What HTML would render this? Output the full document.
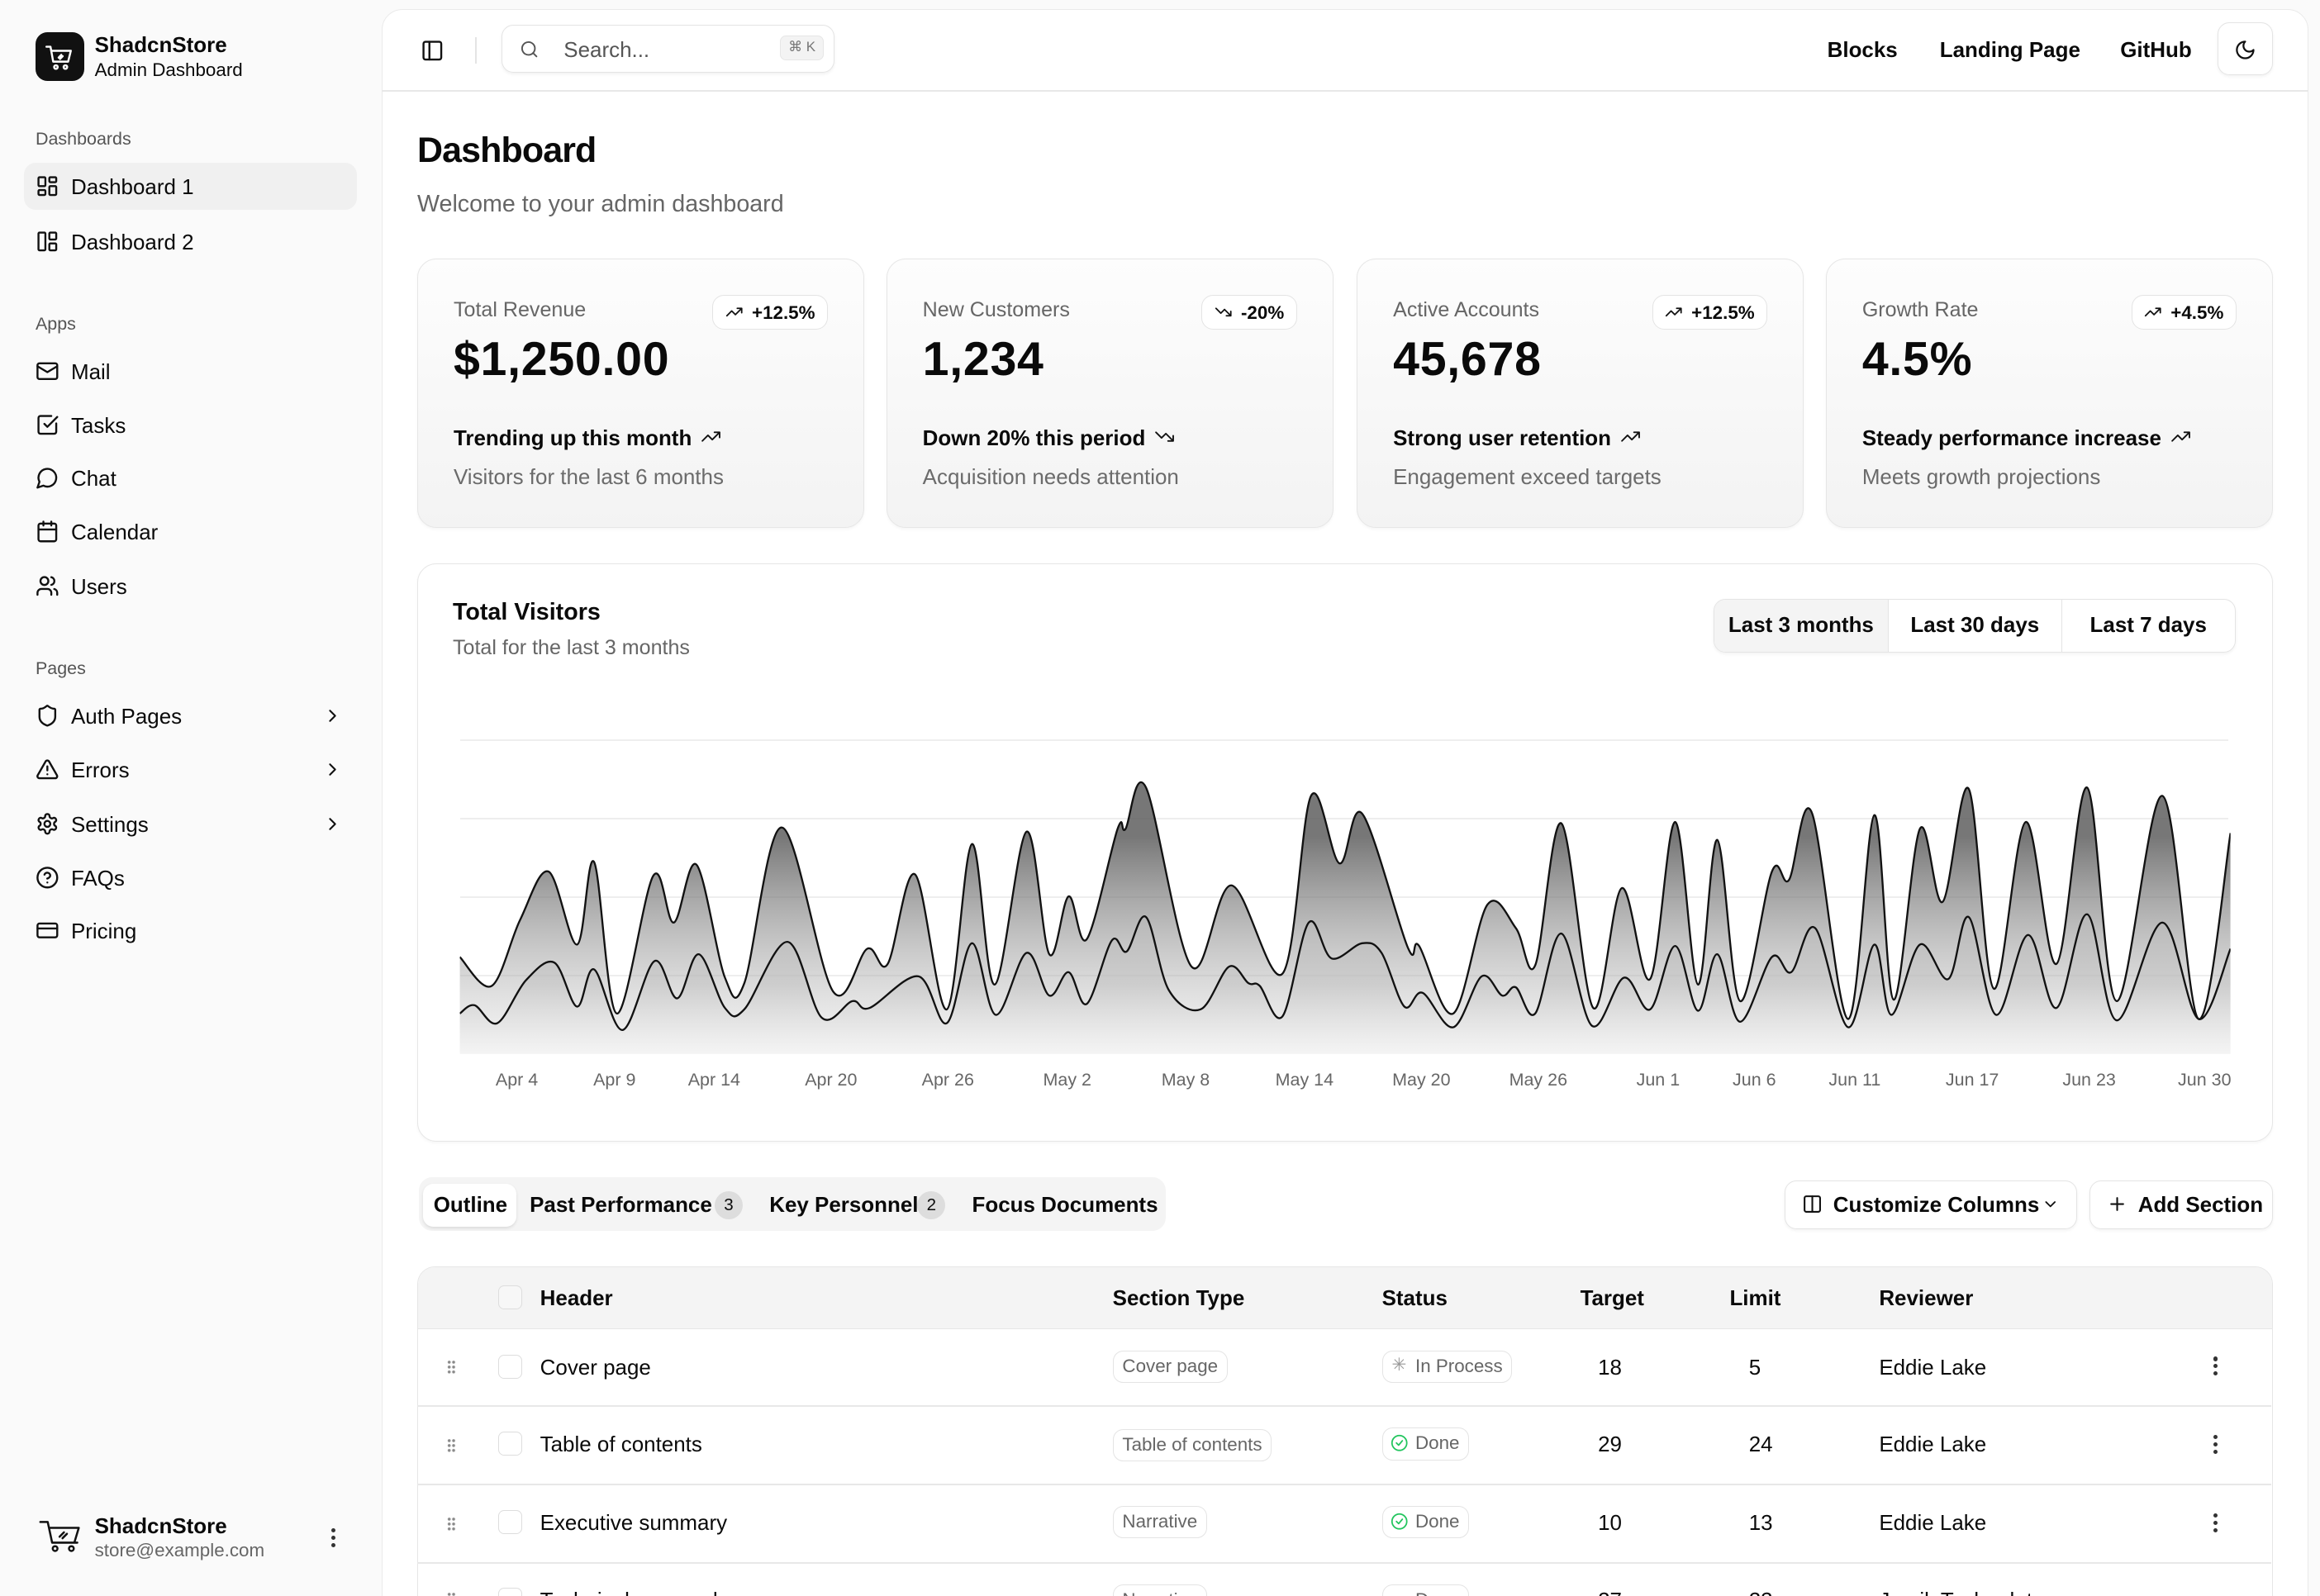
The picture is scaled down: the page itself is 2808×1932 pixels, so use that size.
<!DOCTYPE html>
<html><head><meta charset="utf-8">
<style>
*{box-sizing:border-box;margin:0;padding:0}
html,body{width:2808px;height:1932px;overflow:hidden;background:#fafafa}
#w{position:relative;width:1568px;height:1079px;zoom:1.7908;font-family:"Liberation Sans",Arial,sans-serif;color:#0a0a0a;background:#fafafa;overflow:hidden}
.a{position:absolute}
svg.i{position:absolute;width:16px;height:16px;fill:none;stroke:#111;stroke-width:2;stroke-linecap:round;stroke-linejoin:round}
.nav{position:absolute;left:48px;font-size:14.5px}
.grp{position:absolute;left:24px;font-size:12px;color:#555}
.card{position:absolute;top:175px;width:302px;height:182px;border:1px solid #e6e6e6;border-radius:13px;background:linear-gradient(#fdfdfd,#f3f3f3);box-shadow:0 1px 2px rgba(0,0,0,.04)}
.card .l{position:absolute;left:24px;top:26px;font-size:14px;color:#666}
.card .v{position:absolute;left:24px;top:49px;font-size:32px;font-weight:bold;letter-spacing:.4px}
.card .t{position:absolute;left:24px;top:112px;font-size:14.5px;font-weight:bold}
.card .t svg{position:relative;display:inline-block;vertical-align:-1px;margin-left:6px;width:14px;height:14px;stroke-width:1.8}
.card .s{position:absolute;left:24px;top:138px;font-size:14.5px;color:#6b6b6b}
.badge{position:absolute;right:24px;top:24px;height:23px;border:1px solid #e4e4e4;border-radius:8px;background:#fff;font-size:12.5px;font-weight:bold;padding:4px 8px 0 26px}
.badge svg{left:8px;top:5px;width:12px;height:12px;stroke-width:2}
.th{position:absolute;top:869px;font-size:14.5px;font-weight:bold}
.td{position:absolute;font-size:14.5px}
.pill{position:absolute;height:22px;border:1px solid #e4e4e4;border-radius:7px;font-size:12.5px;color:#666;padding:3px 6px 0;background:#fff}
.cb{position:absolute;left:337px;width:16px;height:16px;border:1px solid #ddd;border-radius:4px;background:#fff}
.rowline{position:absolute;left:282px;width:1253px;height:1px;background:#e8e8e8}
.dots{position:absolute;left:1496px;width:4px}
.dots i{display:block;width:3px;height:3px;border-radius:50%;background:#333;margin-bottom:2px}
.grip{position:absolute;left:302px;width:6px;height:10px;background:radial-gradient(circle,#888 0.8px,transparent 1.2px) 0 0/3px 3.3px}
</style></head><body><div id="w">

<div class="a" style="left:24px;top:22px;width:33px;height:33px;border-radius:8px;background:#111"></div>
<svg class="i" style="left:29px;top:28px;width:23px;height:22px;stroke:#fff;stroke-width:1.5" viewBox="0 0 24 24"><path d="M2 4h3l2 11h11l2-8H6"/><circle cx="9" cy="19" r="1.3"/><circle cx="16" cy="19" r="1.3"/><path d="M11 12l2-2M12 13l2-2"/></svg>
<div class="a" style="left:64px;top:22px;font-size:14.5px;font-weight:bold">ShadcnStore</div>
<div class="a" style="left:64px;top:40px;font-size:12.5px">Admin Dashboard</div>

<div class="grp" style="top:87px">Dashboards</div>
<div class="a" style="left:16px;top:110px;width:225px;height:32px;border-radius:8px;background:#f0f0f0"></div>
<svg class="i" style="left:24px;top:118px" viewBox="0 0 24 24"><rect x="3" y="3" width="7" height="9" rx="1"/><rect x="14" y="3" width="7" height="5" rx="1"/><rect x="14" y="12" width="7" height="9" rx="1"/><rect x="3" y="16" width="7" height="5" rx="1"/></svg>
<div class="nav" style="top:118px">Dashboard 1</div>
<svg class="i" style="left:24px;top:155px" viewBox="0 0 24 24"><rect x="3" y="3" width="7" height="18" rx="1"/><rect x="14" y="3" width="7" height="7" rx="1"/><rect x="14" y="14" width="7" height="7" rx="1"/></svg>
<div class="nav" style="top:155px">Dashboard 2</div>

<div class="grp" style="top:212px">Apps</div>
<svg class="i" style="left:24px;top:243px" viewBox="0 0 24 24"><rect x="2" y="4" width="20" height="16" rx="2"/><path d="M22 7l-10 6L2 7"/></svg>
<div class="nav" style="top:243px">Mail</div>
<svg class="i" style="left:24px;top:279px" viewBox="0 0 24 24"><path d="M21 10.5V19a2 2 0 0 1-2 2H5a2 2 0 0 1-2-2V5a2 2 0 0 1 2-2h11"/><path d="M9 11l3 3L22 4"/></svg>
<div class="nav" style="top:279px">Tasks</div>
<svg class="i" style="left:24px;top:315px" viewBox="0 0 24 24"><path d="M7.9 20A9 9 0 1 0 4 16.1L2 22z"/></svg>
<div class="nav" style="top:315px">Chat</div>
<svg class="i" style="left:24px;top:351px" viewBox="0 0 24 24"><rect x="3" y="4" width="18" height="18" rx="2"/><path d="M16 2v4M8 2v4M3 10h18"/></svg>
<div class="nav" style="top:351px">Calendar</div>
<svg class="i" style="left:24px;top:388px" viewBox="0 0 24 24"><path d="M16 21v-2a4 4 0 0 0-4-4H6a4 4 0 0 0-4 4v2"/><circle cx="9" cy="7" r="4"/><path d="M22 21v-2a4 4 0 0 0-3-3.9M16 3.1a4 4 0 0 1 0 7.8"/></svg>
<div class="nav" style="top:388px">Users</div>

<div class="grp" style="top:445px">Pages</div>
<svg class="i" style="left:24px;top:476px" viewBox="0 0 24 24"><path d="M20 13c0 5-3.5 7.5-7.7 9a1 1 0 0 1-.7 0C7.5 20.5 4 18 4 13V6a1 1 0 0 1 1-1c2 0 4.5-1.2 6.2-2.7a1.2 1.2 0 0 1 1.5 0C14.5 3.8 17 5 19 5a1 1 0 0 1 1 1z"/></svg>
<div class="nav" style="top:476px">Auth Pages</div>
<svg class="i" style="left:24px;top:512px" viewBox="0 0 24 24"><path d="M21.7 18l-8-14a2 2 0 0 0-3.5 0l-8 14A2 2 0 0 0 4 21h16a2 2 0 0 0 1.7-3zM12 9v4M12 17h.01"/></svg>
<div class="nav" style="top:512px">Errors</div>
<svg class="i" style="left:24px;top:549px" viewBox="0 0 24 24"><circle cx="12" cy="12" r="3"/><path d="M12.2 2h-.4a2 2 0 0 0-2 2v.2a2 2 0 0 1-1 1.7l-.4.3a2 2 0 0 1-2 0l-.2-.1a2 2 0 0 0-2.7.7l-.2.4a2 2 0 0 0 .7 2.7l.2.1a2 2 0 0 1 1 1.7v.5a2 2 0 0 1-1 1.7l-.2.1a2 2 0 0 0-.7 2.7l.2.4a2 2 0 0 0 2.7.7l.2-.1a2 2 0 0 1 2 0l.4.3a2 2 0 0 1 1 1.7v.2a2 2 0 0 0 2 2h.4a2 2 0 0 0 2-2v-.2a2 2 0 0 1 1-1.7l.4-.3a2 2 0 0 1 2 0l.2.1a2 2 0 0 0 2.7-.7l.2-.4a2 2 0 0 0-.7-2.7l-.2-.1a2 2 0 0 1-1-1.7v-.5a2 2 0 0 1 1-1.700l.2-.1a2 2 0 0 0 .7-2.7l-.2-.4a2 2 0 0 0-2.7-.7l-.2.1a2 2 0 0 1-2 0l-.4-.3a2 2 0 0 1-1-1.7V4a2 2 0 0 0-2-2z"/></svg>
<div class="nav" style="top:549px">Settings</div>
<svg class="i" style="left:24px;top:585px" viewBox="0 0 24 24"><circle cx="12" cy="12" r="10"/><path d="M9.1 9a3 3 0 0 1 5.8 1c0 2-3 3-3 3M12 17h.01"/></svg>
<div class="nav" style="top:585px">FAQs</div>
<svg class="i" style="left:24px;top:621px" viewBox="0 0 24 24"><rect x="2" y="5" width="20" height="14" rx="2"/><path d="M2 10h20"/></svg>
<div class="nav" style="top:621px">Pricing</div>
<svg class="i" style="left:218px;top:477px;width:14px;height:14px" viewBox="0 0 24 24"><path d="M9 18l6-6-6-6"/></svg>
<svg class="i" style="left:218px;top:513px;width:14px;height:14px" viewBox="0 0 24 24"><path d="M9 18l6-6-6-6"/></svg>
<svg class="i" style="left:218px;top:550px;width:14px;height:14px" viewBox="0 0 24 24"><path d="M9 18l6-6-6-6"/></svg>

<svg class="i" style="left:26px;top:1026px;width:30px;height:26px;stroke-width:1.4" viewBox="0 0 30 26"><path d="M1 3h5l3 14h17M7 7h20l-3 10"/><circle cx="11" cy="21" r="1.6"/><circle cx="22" cy="21" r="1.6"/><path d="M14 13l3-3M16 14l3-3"/></svg>
<div class="a" style="left:64px;top:1023px;font-size:14.5px;font-weight:bold">ShadcnStore</div>
<div class="a" style="left:64px;top:1041px;font-size:12.5px;color:#666">store@example.com</div>
<div class="dots" style="left:224px;top:1033px"><i></i><i></i><i></i></div>

<div class="a" style="left:258px;top:6px;width:1302px;height:1100px;background:#fff;border:1px solid #eaeaea;border-radius:14px"></div>
<div class="a" style="left:258px;top:61px;width:1302px;height:1px;background:#e8e8e8"></div>
<svg class="i" style="left:284px;top:26px" viewBox="0 0 24 24"><rect x="3" y="3" width="18" height="18" rx="2"/><path d="M9 3v18"/></svg>
<div class="a" style="left:321px;top:25px;width:1px;height:18px;background:#e4e4e4"></div>
<div class="a" style="left:339px;top:17px;width:225px;height:32px;border:1px solid #e4e4e4;border-radius:8px;box-shadow:0 1px 2px rgba(0,0,0,.06)"></div>
<svg class="i" style="left:351px;top:27px;width:13px;height:13px;stroke:#555" viewBox="0 0 24 24"><circle cx="11" cy="11" r="8"/><path d="M21 21l-4.3-4.3"/></svg>
<div class="a" style="left:381px;top:25px;font-size:14.5px;color:#555">Search...</div>
<div class="a" style="left:527px;top:24px;width:30px;height:17px;border-radius:4px;background:#f3f3f3;border:1px solid #e6e6e6;font-size:9.5px;color:#777;text-align:center;line-height:15px">⌘ K</div>
<div class="a" style="left:1235px;top:25px;font-size:14.5px;font-weight:600">Blocks</div>
<div class="a" style="left:1311px;top:25px;font-size:14.5px;font-weight:600">Landing Page</div>
<div class="a" style="left:1433px;top:25px;font-size:14.5px;font-weight:600">GitHub</div>
<div class="a" style="left:1499px;top:15px;width:37px;height:36px;border:1px solid #e4e4e4;border-radius:8px;box-shadow:0 1px 2px rgba(0,0,0,.05)"></div>
<svg class="i" style="left:1510px;top:26px;width:15px;height:15px" viewBox="0 0 24 24"><path d="M12 3a6 6 0 0 0 9 9 9 9 0 1 1-9-9z"/></svg>

<div class="a" style="left:282px;top:88px;font-size:24px;font-weight:bold;letter-spacing:-.5px">Dashboard</div>
<div class="a" style="left:282px;top:129px;font-size:16px;color:#666">Welcome to your admin dashboard</div>

<div class="card" style="left:282px"><div class="l">Total Revenue</div><div class="badge"><svg class="i" viewBox="0 0 24 24"><path d="M22 7l-8.5 8.5-5-5L2 17M16 7h6v6"/></svg>+12.5%</div><div class="v">$1,250.00</div><div class="t">Trending up this month<svg class="i" viewBox="0 0 24 24"><path d="M22 7l-8.5 8.5-5-5L2 17M16 7h6v6"/></svg></div><div class="s">Visitors for the last 6 months</div></div>
<div class="card" style="left:599px"><div class="l">New Customers</div><div class="badge"><svg class="i" viewBox="0 0 24 24"><path d="M22 17l-8.5-8.5-5 5L2 7M16 17h6v-6"/></svg>-20%</div><div class="v">1,234</div><div class="t">Down 20% this period<svg class="i" viewBox="0 0 24 24"><path d="M22 17l-8.5-8.5-5 5L2 7M16 17h6v-6"/></svg></div><div class="s">Acquisition needs attention</div></div>
<div class="card" style="left:917px"><div class="l">Active Accounts</div><div class="badge"><svg class="i" viewBox="0 0 24 24"><path d="M22 7l-8.5 8.5-5-5L2 17M16 7h6v6"/></svg>+12.5%</div><div class="v">45,678</div><div class="t">Strong user retention<svg class="i" viewBox="0 0 24 24"><path d="M22 7l-8.5 8.5-5-5L2 17M16 7h6v6"/></svg></div><div class="s">Engagement exceed targets</div></div>
<div class="card" style="left:1234px"><div class="l">Growth Rate</div><div class="badge"><svg class="i" viewBox="0 0 24 24"><path d="M22 7l-8.5 8.5-5-5L2 17M16 7h6v6"/></svg>+4.5%</div><div class="v">4.5%</div><div class="t">Steady performance increase<svg class="i" viewBox="0 0 24 24"><path d="M22 7l-8.5 8.5-5-5L2 17M16 7h6v6"/></svg></div><div class="s">Meets growth projections</div></div>

<div class="a" style="left:282px;top:381px;width:1254px;height:391px;border:1px solid #e6e6e6;border-radius:13px;background:#fff;box-shadow:0 1px 2px rgba(0,0,0,.04)"></div>
<div class="a" style="left:306px;top:405px;font-size:16px;font-weight:bold">Total Visitors</div>
<div class="a" style="left:306px;top:430px;font-size:14px;color:#666">Total for the last 3 months</div>
<div class="a" style="left:1158px;top:405px;width:353px;height:36px;border:1px solid #e4e4e4;border-radius:8px;overflow:hidden;display:flex;font-size:14.5px;font-weight:600;box-shadow:0 1px 2px rgba(0,0,0,.05)">
<div style="width:118px;background:#f4f4f4;text-align:center;line-height:34px;border-right:1px solid #e4e4e4">Last 3 months</div>
<div style="width:117px;text-align:center;line-height:34px;border-right:1px solid #e4e4e4">Last 30 days</div>
<div style="flex:1;text-align:center;line-height:34px">Last 7 days</div></div>
<div class="a" style="left:311px;top:500px;width:1195px;height:1px;background:#eee"></div>
<div class="a" style="left:311px;top:553px;width:1195px;height:1px;background:#eee"></div>
<div class="a" style="left:311px;top:606px;width:1195px;height:1px;background:#eee"></div>
<div class="a" style="left:311px;top:659px;width:1195px;height:1px;background:#eee"></div>
<svg id="ch" class="a" style="left:301.5px;top:480.2px;width:1206px;height:257px;overflow:hidden" viewBox="0 0 1568 1380" preserveAspectRatio="none">
<defs>
<linearGradient id="g1" x1="0" y1="0" x2="0" y2="1"><stop offset="0.2" stop-color="#555" stop-opacity=".8"/><stop offset="1" stop-color="#ddd" stop-opacity=".3"/></linearGradient>
<linearGradient id="g2" x1="0" y1="0" x2="0" y2="1"><stop offset="0.5" stop-color="#bbb" stop-opacity=".45"/><stop offset="1" stop-color="#f2f2f2" stop-opacity=".3"/></linearGradient>
<clipPath id="cp"><rect x="12" y="0" width="1556" height="1247"/></clipPath>
</defs>
<g clip-path="url(#cp)"><path id="f1" fill="url(#g1)"/><path id="f2" fill="url(#g2)"/><path id="s1" fill="none" stroke="#111" stroke-width="1.3" vector-effect="non-scaling-stroke"/><path id="s2" fill="none" stroke="#111" stroke-width="1.3" vector-effect="non-scaling-stroke"/></g>
</svg>
<div class="a" style="top:723px;left:0;width:1568px;font-size:12px;color:#666">
<span class="a" style="left:335px">Apr 4</span><span class="a" style="left:401px">Apr 9</span><span class="a" style="left:465px">Apr 14</span><span class="a" style="left:544px">Apr 20</span><span class="a" style="left:623px">Apr 26</span><span class="a" style="left:705px">May 2</span><span class="a" style="left:785px">May 8</span><span class="a" style="left:862px">May 14</span><span class="a" style="left:941px">May 20</span><span class="a" style="left:1020px">May 26</span><span class="a" style="left:1106px">Jun 1</span><span class="a" style="left:1171px">Jun 6</span><span class="a" style="left:1236px">Jun 11</span><span class="a" style="left:1315px">Jun 17</span><span class="a" style="left:1394px">Jun 23</span><span class="a" style="left:1472px">Jun 30</span></div>

<div class="a" style="left:283px;top:796px;width:505px;height:36px;background:#f4f4f4;border-radius:9px"></div>
<div class="a" style="left:286px;top:800px;width:63px;height:29px;background:#fff;border-radius:7px;box-shadow:0 1px 2px rgba(0,0,0,.1)"></div>
<div class="a" style="left:293px;top:806px;font-size:14.5px;font-weight:600">Outline</div>
<div class="a" style="left:358px;top:806px;font-size:14.5px;font-weight:600">Past Performance</div>
<div class="a" style="left:483px;top:805px;width:19px;height:19px;border-radius:50%;background:#ddd;font-size:11.5px;text-align:center;line-height:19px">3</div>
<div class="a" style="left:520px;top:806px;font-size:14.5px;font-weight:600">Key Personnel</div>
<div class="a" style="left:620px;top:805px;width:19px;height:19px;border-radius:50%;background:#ddd;font-size:11.5px;text-align:center;line-height:19px">2</div>
<div class="a" style="left:657px;top:806px;font-size:14.5px;font-weight:600">Focus Documents</div>
<div class="a" style="left:1206px;top:798px;width:198px;height:33px;border:1px solid #e4e4e4;border-radius:8px;box-shadow:0 1px 2px rgba(0,0,0,.05)"></div>
<svg class="i" style="left:1218px;top:807px;width:14px;height:14px" viewBox="0 0 24 24"><rect x="3" y="3" width="18" height="18" rx="2"/><path d="M12 3v18"/></svg>
<div class="a" style="left:1239px;top:806px;font-size:14.5px;font-weight:600">Customize Columns</div>
<svg class="i" style="left:1380px;top:808px;width:12px;height:12px" viewBox="0 0 24 24"><path d="M6 9l6 6 6-6"/></svg>
<div class="a" style="left:1412px;top:798px;width:124px;height:33px;border:1px solid #e4e4e4;border-radius:8px;box-shadow:0 1px 2px rgba(0,0,0,.05)"></div>
<svg class="i" style="left:1424px;top:807px;width:14px;height:14px" viewBox="0 0 24 24"><path d="M12 5v14M5 12h14"/></svg>
<div class="a" style="left:1445px;top:806px;font-size:14.5px;font-weight:600">Add Section</div>

<div class="a" style="left:282px;top:856px;width:1254px;height:260px;border:1px solid #e6e6e6;border-radius:12px;overflow:hidden"><div style="height:42px;background:#f4f4f4;border-bottom:1px solid #e6e6e6"></div></div>
<div class="cb" style="top:869px;background:#f7f7f7"></div>
<div class="th" style="left:365px">Header</div><div class="th" style="left:752px">Section Type</div><div class="th" style="left:934px">Status</div><div class="th" style="left:1068px">Target</div><div class="th" style="left:1169px">Limit</div><div class="th" style="left:1270px">Reviewer</div>

<div class="rowline" style="top:950px"></div><div class="rowline" style="top:1003px"></div><div class="rowline" style="top:1056px"></div>

<div class="grip" style="top:919px"></div><div class="cb" style="top:916px"></div>
<div class="td" style="left:365px;top:916px">Cover page</div>
<div class="pill" style="left:752px;top:913px">Cover page</div>
<div class="pill" style="left:934px;top:913px;padding-left:22px"><span class="a" style="left:6px;top:2px;font-size:12px;color:#999">✳</span>In Process</div>
<div class="td" style="left:1080px;top:916px">18</div><div class="td" style="left:1182px;top:916px">5</div><div class="td" style="left:1270px;top:916px">Eddie Lake</div>
<div class="dots" style="top:917px"><i></i><i></i><i></i></div>

<div class="grip" style="top:972px"></div><div class="cb" style="top:968px"></div>
<div class="td" style="left:365px;top:968px">Table of contents</div>
<div class="pill" style="left:752px;top:966px">Table of contents</div>
<div class="pill" style="left:934px;top:965px;padding-left:22px"><svg class="i" style="left:5px;top:4px;width:12px;height:12px;stroke:#22c55e" viewBox="0 0 24 24"><circle cx="12" cy="12" r="10"/><path d="M8 12l3 3 5-6"/></svg>Done</div>
<div class="td" style="left:1080px;top:968px">29</div><div class="td" style="left:1182px;top:968px">24</div><div class="td" style="left:1270px;top:968px">Eddie Lake</div>
<div class="dots" style="top:970px"><i></i><i></i><i></i></div>

<div class="grip" style="top:1025px"></div><div class="cb" style="top:1021px"></div>
<div class="td" style="left:365px;top:1021px">Executive summary</div>
<div class="pill" style="left:752px;top:1018px">Narrative</div>
<div class="pill" style="left:934px;top:1018px;padding-left:22px"><svg class="i" style="left:5px;top:4px;width:12px;height:12px;stroke:#22c55e" viewBox="0 0 24 24"><circle cx="12" cy="12" r="10"/><path d="M8 12l3 3 5-6"/></svg>Done</div>
<div class="td" style="left:1080px;top:1021px">10</div><div class="td" style="left:1182px;top:1021px">13</div><div class="td" style="left:1270px;top:1021px">Eddie Lake</div>
<div class="dots" style="top:1023px"><i></i><i></i><i></i></div>

<div class="grip" style="top:1076px"></div><div class="cb" style="top:1073px"></div>
<div class="td" style="left:365px;top:1073px">Technical approach</div>
<div class="pill" style="left:752px;top:1071px">Narrative</div>
<div class="pill" style="left:934px;top:1071px;padding-left:22px">Done</div>
<div class="td" style="left:1080px;top:1073px">27</div><div class="td" style="left:1182px;top:1073px">23</div><div class="td" style="left:1270px;top:1073px">Jamik Tashpulatov</div>
</div>
<script>
var T=[[12,895],[40,1000],[65,760],[90,585],[115,850],[130,550],[150,1100],[182,600],[200,770],[220,560],[245,970],[262,990],[295,425],[340,1020],[370,865],[388,920],[412,595],[440,1085],[462,485],[482,995],[510,440],[530,885],[547,675],[563,830],[590,430],[597,430],[615,280],[655,930],[690,635],[735,955],[760,310],[785,555],[805,375],[845,860],[855,855],[885,1100],[915,705],[940,790],[957,925],[980,410],[1008,1080],[1033,645],[1058,975],[1080,405],[1100,995],[1117,470],[1137,1055],[1165,585],[1180,615],[1200,370],[1232,1120],[1255,380],[1272,1050],[1295,430],[1315,695],[1338,285],[1360,1010],[1388,405],[1415,920],[1442,280],[1468,1055],[1508,310],[1540,1120],[1568,445]];
var B=[[12,1100],[25,1070],[45,1135],[70,980],[95,915],[115,1075],[130,940],[155,1160],[183,910],[203,1045],[222,885],[245,1080],[262,1085],[300,840],[330,1115],[357,1055],[372,1080],[415,965],[440,1135],[462,845],[483,1105],[510,880],[530,1035],[547,950],[563,1065],[585,835],[598,875],[615,750],[635,1015],[663,1085],[688,930],[705,990],[715,1000],[735,1110],[758,770],[778,900],[805,845],[822,880],[842,1075],[858,1025],[885,1150],[910,965],[928,1035],[940,1005],[957,1100],[980,810],[1007,1145],[1035,970],[1058,1085],[1080,855],[1100,1090],[1117,885],[1137,1130],[1165,895],[1182,950],[1203,790],[1232,1150],[1255,850],[1270,1105],[1295,850],[1320,975],[1338,750],[1362,1105],[1390,815],[1415,1080],[1442,740],[1468,1125],[1508,770],[1540,1120],[1568,865]];
function cr(p){var d="M"+p[0][0]+","+p[0][1];for(var i=0;i<p.length-1;i++){var a=p[i-1]||p[i],b=p[i],c=p[i+1],e=p[i+2]||c;d+=" C"+(b[0]+(c[0]-a[0])/6)+","+(b[1]+(c[1]-a[1])/6)+" "+(c[0]-(e[0]-b[0])/6)+","+(c[1]-(e[1]-b[1])/6)+" "+c[0]+","+c[1];}return d;}
var t=cr(T),b=cr(B);
document.getElementById("s1").setAttribute("d",t);document.getElementById("s2").setAttribute("d",b);
document.getElementById("f1").setAttribute("d",t+" L1568,1247 L12,1247Z");
document.getElementById("f2").setAttribute("d",b+" L1568,1247 L12,1247Z");
</script>
</body></html>
